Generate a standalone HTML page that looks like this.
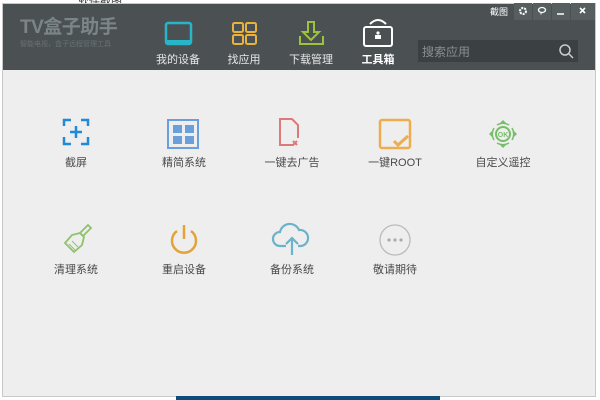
<!DOCTYPE html>
<html><head><meta charset="utf-8"><style>
*{margin:0;padding:0;box-sizing:border-box}
body{width:600px;height:400px;background:#fff;position:relative;overflow:hidden;font-family:"Liberation Sans","Noto Sans CJK SC",sans-serif}
.a{position:absolute}
.win{left:2px;top:3px;width:594px;height:394px;background:#eeeeee;border:1px solid #c8c8c8}
.hdr{left:3px;top:4px;width:592px;height:66px;background:#4b5153}
.nl{font-size:11px;color:#e6e6e6;width:70px;text-align:center;top:51px}
.lb{font-size:11px;color:#4a4a4a;width:100px;text-align:center}
</style></head><body>
<div class="a" style="left:78px;top:-7px;font-size:11px;color:#333">软件截图</div>
<div class="a win"></div>
<div class="a hdr"></div>
<div class="a" style="left:20px;top:18px;font-size:19px;line-height:20px;font-weight:bold;color:#7b8587;letter-spacing:-0.5px">TV盒子助手</div>
<div class="a" style="left:20px;top:41px;font-size:7px;line-height:8px;color:#687173">智能电视，盒子远程管理工具</div>
<svg class="a" style="left:0;top:0" width="600" height="400">
<rect x="166" y="23" width="25" height="21" rx="2" fill="none" stroke="#27b5c9" stroke-width="2.5"/>
<rect x="166" y="40" width="25" height="4" fill="#27b5c9"/>
<rect x="233" y="23" width="10" height="9" rx="1.5" fill="none" stroke="#e9b23b" stroke-width="2"/>
<rect x="246" y="23" width="10" height="9" rx="1.5" fill="none" stroke="#e9b23b" stroke-width="2"/>
<rect x="233" y="35" width="10" height="9" rx="1.5" fill="none" stroke="#e9b23b" stroke-width="2"/>
<rect x="246" y="35" width="10" height="9" rx="1.5" fill="none" stroke="#e9b23b" stroke-width="2"/>
<path d="M308 22v10h-5l8 8 8-8h-5V22z" fill="none" stroke="#9dc33c" stroke-width="2"/>
<path d="M300 36v8h23v-8" fill="none" stroke="#9dc33c" stroke-width="2"/>
<rect x="364" y="27" width="28" height="19" rx="2" fill="none" stroke="#fff" stroke-width="2"/>
<path d="M370 24q8-8 16 0" fill="none" stroke="#fff" stroke-width="2"/>
<rect x="375" y="35" width="6" height="4" fill="#fff"/><circle cx="378" cy="33" r="1.6" fill="#fff"/>
<rect x="418" y="40" width="160" height="22" fill="#3b4042"/>
<circle cx="565" cy="50" r="5" fill="none" stroke="#ccc" stroke-width="1.5"/><path d="M569 54l4 4" stroke="#ccc" stroke-width="1.5"/>
<rect x="514" y="3" width="18" height="17" fill="#575e60"/><rect x="533" y="3" width="18" height="17" fill="#575e60"/><rect x="552" y="3" width="18" height="17" fill="#575e60"/><rect x="571" y="3" width="24" height="17" fill="#575e60"/>
<circle cx="523" cy="11" r="3" fill="none" stroke="#fff" stroke-width="2" stroke-dasharray="2 1"/>
<ellipse cx="542" cy="10" rx="3.5" ry="2.5" fill="none" stroke="#fff" stroke-width="1.3"/><path d="M541 12.5v2" stroke="#fff"/>
<path d="M557 14h7" stroke="#fff" stroke-width="1.5"/>
<path d="M580 8l5 5M585 8l-5 5" stroke="#fff" stroke-width="1.6"/>
<path d="M64 126v-6h7M81 120h7v6M88 137v7h-7M71 144h-7v-7" fill="none" stroke="#1e8ad8" stroke-width="2.5"/>
<path d="M76 126v12M70 132h12" stroke="#1e8ad8" stroke-width="2.5"/>
<rect x="168" y="120" width="30" height="28" fill="none" stroke="#6a9fdc" stroke-width="2"/>
<rect x="173" y="125" width="9" height="8" fill="#6a9fdc"/><rect x="185" y="125" width="9" height="8" fill="#6a9fdc"/><rect x="173" y="136" width="9" height="8" fill="#6a9fdc"/><rect x="185" y="136" width="9" height="8" fill="#6a9fdc"/>
<path d="M294 145h-14v-26h12l6 6v13" fill="none" stroke="#dc7a78" stroke-width="2"/>
<path d="M293 141l4 4M297 141l-4 4" stroke="#dc7a78" stroke-width="2"/>
<rect x="380" y="120" width="30" height="28" rx="2" fill="none" stroke="#eeac4e" stroke-width="2.5"/>
<path d="M394 141l4 4 10-9" fill="none" stroke="#eeac4e" stroke-width="3"/>
<circle cx="503" cy="134" r="7" fill="none" stroke="#78bd6a" stroke-width="2"/>
<text x="503" y="137" font-size="7" font-weight="bold" fill="#78bd6a" text-anchor="middle" font-family="Liberation Sans">OK</text>
<path d="M503 120l-4 4h8zM503 148l-4-4h8zM489 134l4-4v8zM517 134l-4-4v8z" fill="#78bd6a"/>
<path d="M494 128a12 12 0 0 0 0 12M512 128a12 12 0 0 1 0 12M497 125a12 12 0 0 1 12 0M497 143a12 12 0 0 0 12 0" fill="none" stroke="#78bd6a" stroke-width="1.5"/>
<path d="M80 233l8-8 3 3-8 8z" fill="none" stroke="#8fc26a" stroke-width="1.8"/>
<path d="M80 233l-8 2-7 8 9 9 8-7 2-8z" fill="none" stroke="#8fc26a" stroke-width="1.8"/>
<path d="M69 244l6 6M72 241l6 6" stroke="#8fc26a" stroke-width="1"/>
<path d="M177 231a12 12 0 1 0 14 0" fill="none" stroke="#e4a33a" stroke-width="2.5"/>
<path d="M184 225v14" stroke="#e4a33a" stroke-width="2.5"/>
<path d="M286 246h-6a7 7 0 0 1 0-14 10 10 0 0 1 19-2 8 8 0 0 1 2 16h-3" fill="none" stroke="#6bb3ca" stroke-width="2.2"/>
<path d="M292 255v-17M286 244l6-6 6 6" fill="none" stroke="#6bb3ca" stroke-width="2.2"/>
<circle cx="395" cy="240" r="15" fill="none" stroke="#bbb" stroke-width="1.3"/>
<circle cx="389" cy="240" r="1.6" fill="#aaa"/><circle cx="395" cy="240" r="1.6" fill="#aaa"/><circle cx="401" cy="240" r="1.6" fill="#aaa"/>
<rect x="176" y="396" width="264" height="4" fill="#0b4d78"/>
</svg>
<div class="a nl" style="left:143px">我的设备</div>
<div class="a nl" style="left:209px">找应用</div>
<div class="a nl" style="left:276px">下载管理</div>
<div class="a nl" style="left:343px;color:#fff;font-weight:bold">工具箱</div>
<div class="a" style="left:422px;top:43px;font-size:12px;color:#8a9092">搜索应用</div>
<div class="a" style="left:490px;top:5px;font-size:9px;color:#fff">截图</div>
<div class="a lb" style="left:26px;top:154px">截屏</div>
<div class="a lb" style="left:134px;top:154px">精简系统</div>
<div class="a lb" style="left:242px;top:154px">一键去广告</div>
<div class="a lb" style="left:345px;top:154px">一键ROOT</div>
<div class="a lb" style="left:453px;top:154px">自定义遥控</div>
<div class="a lb" style="left:26px;top:261px">清理系统</div>
<div class="a lb" style="left:134px;top:261px">重启设备</div>
<div class="a lb" style="left:242px;top:261px">备份系统</div>
<div class="a lb" style="left:345px;top:261px">敬请期待</div>
</body></html>
